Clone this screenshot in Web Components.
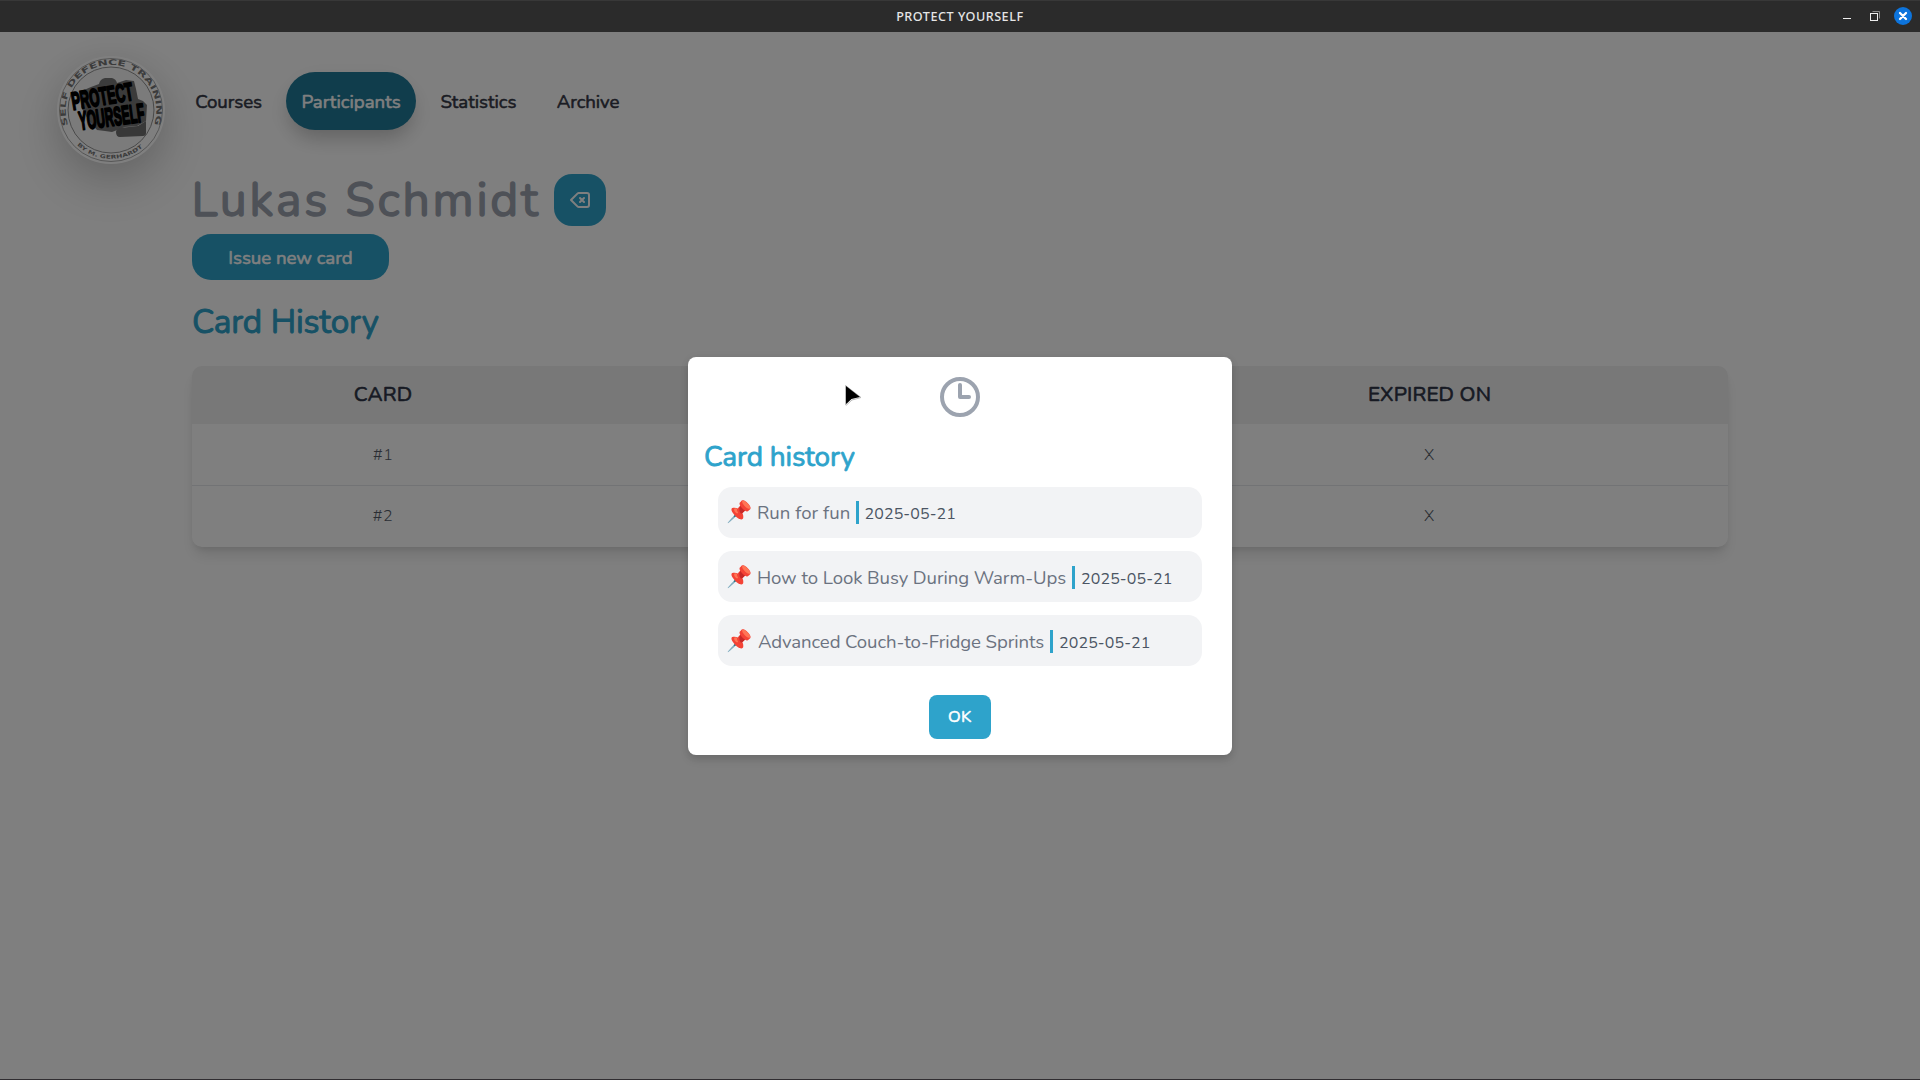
<!DOCTYPE html>
<html lang="en">
<head>
<meta charset="utf-8">
<title>PROTECT YOURSELF</title>
<style>
html,body{margin:0;height:100%;overflow:hidden;background:#fff;font-family:Nunito,Lato,"Open Sans",sans-serif;}
</style>
</head>
<body>
<app-window></app-window>
<script>
// Text whose inked width is spread to the "w" attribute with letter spacing.
// The "bold" attribute thickens the regular cut with an outline.
customElements.define('fit-text', class extends HTMLElement {
  connectedCallback() {
    const root = this.attachShadow({mode: 'open'});
    root.innerHTML = `<style>:host{display:block;flex:none;white-space:nowrap;text-align:left}span{display:inline-block}</style><span></span>`;
    const span = root.querySelector('span');
    const text = this.getAttribute('text'), w = +this.getAttribute('w');
    span.textContent = text;
    this.style.width = w + 'px';
    const cs = getComputedStyle(this);
    const stroke = this.hasAttribute('bold') ? parseFloat(cs.fontSize) / 34 : 0;
    if (stroke) span.style.webkitTextStroke = stroke.toFixed(2) + 'px currentColor';
    const ctx = document.createElement('canvas').getContext('2d');
    // measured at 10x so that the bounds are not rounded to whole pixels
    ctx.font = `${cs.fontWeight} ${parseFloat(cs.fontSize) * 10}px ${cs.fontFamily}`;
    const m = ctx.measureText(text);
    const ink = (m.actualBoundingBoxRight + m.actualBoundingBoxLeft) / 10 + stroke;
    if (text.length > 1) span.style.letterSpacing = ((w - ink) / (text.length - 1)).toFixed(3) + 'px';
    span.style.marginLeft = (m.actualBoundingBoxLeft / 10 + stroke / 2).toFixed(2) + 'px';
  }
});

class El extends HTMLElement {
  connectedCallback() {
    if (!this.shadowRoot) this.attachShadow({mode: 'open'}).innerHTML = this.view();
  }
}

customElements.define('title-bar', class extends El {
  view() { return `<style>
    :host{display:grid;grid-template-columns:1fr auto 1fr;align-items:center;height:32px;box-sizing:border-box;background:#2b2b2b;border-top:1px solid #383838;color:#e6e6e6;flex:none}
    fit-text{font:550 12.6px/18px "Noto Sans","Open Sans",sans-serif;grid-column:2;padding-top:1px}
    .b{display:flex;justify-content:flex-end;padding:0 8px 1px 0}
    svg{display:block}</style>
    <fit-text text="PROTECT YOURSELF" w="125.5"></fit-text>
    <div class="b"><svg width="72" height="20" viewBox="0 0 72 20" fill="none">
      <path d="M3 12.500h8" stroke="#eee"/>
      <path d="M32.500 5.500h7v7" stroke="#8a8a8a"/><rect x="30.500" y="7.500" width="7" height="7" stroke="#eee" />
      <circle cx="63" cy="10" r="9" fill="#0d74dc"/><path d="M60 7l6 6m0-6l-6 6" stroke="#fff" stroke-width="2.3" stroke-linecap="round"/>
    </svg></div>`; }
});

customElements.define('brand-logo', class extends El {
  view() { return `<style>:host{display:block;width:108px;height:108px;border-radius:50%;background:#fff;box-shadow:0 20px 50px rgba(0,0,0,.19),0 2px 34px rgba(0,0,0,.05)}
    svg{display:block;overflow:visible} text{font-family:"DejaVu Sans","Open Sans",sans-serif;font-weight:700}
    .m{font-family:"Liberation Sans",sans-serif}</style>
    <svg width="108" height="108" viewBox="-54 -54 108 108">
      <defs><path id="t" d="M-42.700 15.200A45.300 45.300 0 1 1 41.700 18"/><path id="b" d="M-34 35A48.800 48.800 0 0 0 34 35"/></defs>
      <circle r="51.500" fill="#fff" stroke="#888" stroke-width=".7"/>
      <circle r="43" fill="#f6f6f6" stroke="#777" stroke-width=".8"/>
      <text font-size="7.600" fill="#777"><textPath href="#t" textLength="172" lengthAdjust="spacingAndGlyphs">SELF DEFENCE TRAINING</textPath></text>
      <text font-size="5.200" fill="#777"><textPath href="#b" textLength="72" lengthAdjust="spacingAndGlyphs">BY M. GERHARDT</textPath></text>
      <path d="M-27-20l7-3 8-3q1-5 6-6h7q4 1 5 5l9-3 8 1 2 8 2 10 5 2 4 4-1 16-9 5-12 1-13 5-7-1-8-1-8-9-8-14z" fill="#777"/>
      <path d="M5 22q0-3 4-4l18-2 8-5v12q0 3-3 3L9 27q-4 0-4-5z" fill="#707070"/>
      <g transform="translate(-38,0) rotate(-9.500)" fill="#000" stroke="#000" stroke-width="2" stroke-linejoin="round">
        <text class="m" font-size="25" textLength="62" lengthAdjust="spacingAndGlyphs">PROTECT</text>
      </g>
      <g transform="translate(-31,20) rotate(-7.500)" fill="#000" stroke="#000" stroke-width="2" stroke-linejoin="round">
        <text class="m" font-size="26" textLength="66" lengthAdjust="spacingAndGlyphs">YOURSELF</text>
      </g>
    </svg>`; }
});

customElements.define('main-nav', class extends El {
  view() { return `<style>
    :host{display:flex;align-items:center;height:58px;font-size:18.700px;line-height:28px;font-weight:400}
    .i{padding-top:2px;color:#353846}
    .p{display:flex;align-items:center;height:58px;width:130px;justify-content:center;border-radius:29px;background:#207a98;color:#fff;margin:0 25px 0 24.500px;box-shadow:0 12px 20px -4px rgba(0,0,0,.2),0 4px 30px rgba(0,0,0,.04)}
    .p fit-text{padding:2px 0 0 1px}
    .l{margin-left:41px}</style>
    <fit-text bold class="i" text="Courses" w="65.5"></fit-text>
    <div class="p"><fit-text bold text="Participants" w="97.5"></fit-text></div>
    <fit-text bold class="i" text="Statistics" w="75"></fit-text>
    <fit-text bold class="i l" text="Archive" w="62"></fit-text>`; }
});

customElements.define('person-header', class extends El {
  view() { return `<style>
    :host{display:flex;flex-direction:column;align-items:flex-start;color:#9ca3af;font-weight:400}
    .r{display:flex;align-items:center;gap:14.500px;height:52px;padding-left:2.500px}
    .n{font-size:48px;line-height:52px;padding-bottom:1px}
    .k{width:52px;height:52px;border-radius:18px;background:#2ea3cb;display:flex;align-items:center;justify-content:center}
    .c{margin-top:8px;width:197px;height:46px;border-radius:19px;background:#2ea3cb;color:#fff;display:flex;align-items:center;justify-content:center;font-size:18.700px;line-height:28px}
    .c fit-text{padding-top:2px}
    .h{margin:22px 0 0 1px;font-size:33.300px;line-height:40px;color:#2ea3cb}</style>
    <div class="r"><fit-text bold class="n" text="Lukas Schmidt" w="344.5"></fit-text>
      <div class="k"><svg width="24" height="24" viewBox="0 0 24 24" fill="none" stroke="#fff" stroke-width="2" stroke-linecap="round" stroke-linejoin="round"><path d="M12 14l2-2m0 0l2-2m-2 2l-2-2m2 2l2 2M3 12l6.414 6.414a2 2 0 001.414.586H19a2 2 0 002-2V7a2 2 0 00-2-2h-8.172a2 2 0 00-1.414.586L3 12z"/></svg></div></div>
    <div class="c"><fit-text bold text="Issue new card" w="122"></fit-text></div>
    <fit-text bold class="h" text="Card History" w="186"></fit-text>`; }
});

customElements.define('card-table', class extends El {
  view() { return `<style>
    :host{display:block;margin-top:24px;border-radius:10px;overflow:hidden;box-shadow:0 10px 15px -3px rgba(0,0,0,.12),0 4px 6px -2px rgba(0,0,0,.08)}
    .r{display:grid;grid-template-columns:381px 1fr 598px;justify-items:center;align-items:center;height:61px;font-size:16px;font-weight:350;color:#565d69}
    .r>:last-child{grid-column:3}
    .d{border-top:1px solid #e5e7eb}
    .d fit-text{padding-bottom:1px}
    .d.first{border:0}
    .d.first fit-text{padding:0}
    .h{height:58px;background:#f0f0f0;font-size:20.700px;font-weight:400;color:#2f3547}
    .h fit-text{padding:0 0 3px 1px}</style>
    <div class="r h"><fit-text bold text="CARD" w="56.5"></fit-text><fit-text bold text="EXPIRED ON" w="120"></fit-text></div>
    <div class="r d first"><fit-text text="#1" w="18"></fit-text><fit-text text="X" w="9"></fit-text></div>
    <div class="r d"><fit-text text="#2" w="18.5"></fit-text><fit-text text="X" w="9"></fit-text></div>`; }
});

customElements.define('history-item', class extends El {
  view() { return `<style>
    :host{display:flex;align-items:center;height:51px;box-sizing:border-box;border-radius:14px;background:#f2f3f5;padding-left:10px;line-height:28px;font-size:18.600px;font-weight:370;color:#6b7280}
    :host([low]){padding-top:2px}
    fit-text{padding-top:1px}
    .e{width:25px;font:21px/24px "Noto Color Emoji";margin:0 7px 0 -1.500px;padding-bottom:1px;overflow:visible;white-space:nowrap}
    i{width:3px;height:23px;background:#2ea3cb;margin:0 7px 0 6.500px}
    .d{font-size:16px;color:#4b5563;padding-top:2px}</style>
    <span class="e">📌</span><fit-text text="${this.getAttribute('name')}" w="${this.getAttribute('w')}"></fit-text><i></i><fit-text class="d" text="2025-05-21" w="89.2"></fit-text>`; }
});

customElements.define('history-dialog', class extends El {
  view() { return `<style>
    :host{display:flex;flex-direction:column;width:544px;height:398px;box-sizing:border-box;background:#fff;border-radius:8px;padding:16px;box-shadow:0 5px 8px rgba(0,0,0,.12),0 1px 10px rgba(0,0,0,.06)}
    .k{align-self:center;display:block}
    .t{margin:20px 0 0 1px;font-size:28px;line-height:32px;font-weight:400;color:#2ea3cb}
    .l{display:flex;flex-direction:column;gap:13px;padding:14px 14px 0}
    .b{align-self:center;margin-top:29px;width:62px;height:44px;border-radius:8px;background:#2ea3cb;color:#fff;display:flex;align-items:center;justify-content:center;font-size:16.500px;font-weight:400;line-height:24px;flex:none}</style>
    <svg class="k" width="48" height="48" viewBox="0 0 24 24" fill="none" stroke="#9ca3af" stroke-width="2" stroke-linecap="round" stroke-linejoin="round"><path d="M12 6v6h4.5m4.5 0a9 9 0 11-18 0 9 9 0 0118 0z"/></svg>
    <fit-text bold class="t" text="Card history" w="150"></fit-text>
    <div class="l">
      <history-item name="Run for fun" w="90.5"></history-item>
      <history-item low name="How to Look Busy During Warm-Ups" w="307"></history-item>
      <history-item low name="Advanced Couch-to-Fridge Sprints" w="285"></history-item>
    </div>
    <div class="b"><fit-text bold text="OK" w="22.5"></fit-text></div>`; }
});

customElements.define('app-window', class extends El {
  view() { return `<style>
    :host{display:flex;flex-direction:column;width:1920px;height:1080px;box-sizing:border-box;border-bottom:1px solid #302d31}
    .body{display:grid;flex:1;min-height:0;background:#fff}
    .page,.veil{grid-area:1/1}
    .page{display:grid;grid-template-columns:56.500px 108px 27.500px 1536px 1fr;align-items:start}
    brand-logo{grid-column:2;margin-top:24px}
    main{grid-column:4;display:flex;flex-direction:column;padding-top:40px}
    main-nav{padding-left:4px}
    person-header{margin-top:44px}
    .veil{position:relative;background:rgba(0,0,0,.5);display:flex;justify-content:center;align-items:flex-start;padding-top:325px}
    .cur{position:absolute;left:843px;top:350px}</style>
    <title-bar></title-bar>
    <div class="body">
      <div class="page"><brand-logo></brand-logo><main><main-nav></main-nav><person-header></person-header><card-table></card-table></main></div>
      <div class="veil"><history-dialog></history-dialog>
        <svg class="cur" width="22" height="28" viewBox="0 0 22 28"><path d="M2.500 3.500l15.500 12-9 2.500-5.500 5q-1 .5-1-1z" fill="#fff" stroke="#aaa" stroke-width=".8"/><path d="M3 4l14 11-8.500 2-5 4.800q-.5.3-.5-.8z" fill="#000"/></svg>
      </div>
    </div>`; }
});
</script>
</body>
</html>
